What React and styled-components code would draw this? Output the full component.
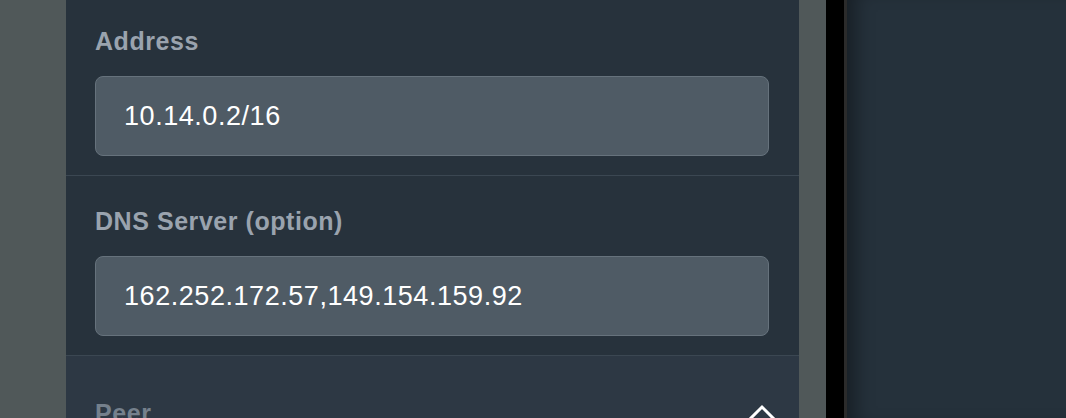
import styled, { createGlobalStyle } from 'styled-components';

const GlobalStyle = createGlobalStyle`
  html, body {
    margin: 0;
    padding: 0;
    height: 418px;
    overflow: hidden;
    background: #505859;
  }
  * {
    box-sizing: border-box;
  }
`;

const Screen = styled.div`
  display: flex;
  height: 418px;
  width: 1066px;
  font-family: 'Liberation Sans', Arial, sans-serif;
`;

const Dim = styled.div`
  flex: 0 0 ${(p) => p.$w}px;
  background: #505859;
`;

// panel is scrolled a few px, so the first section starts above the top edge
const Panel = styled.div`
  flex: 0 0 733px;
  background: #27323c;
  display: flex;
  flex-direction: column;
  margin-top: -4px;
`;

const Section = styled.div`
  padding: 30px 30px 19px 29px;
  border-bottom: 1px solid #3b4752;
`;

const Label = styled.div`
  font-size: 25px;
  line-height: 30px;
  font-weight: 700;
  letter-spacing: 0.55px;
  color: #9aa3ae;
  margin-bottom: 20px;
`;

const Field = styled.div`
  height: 80px;
  border: 1px solid #66727c;
  border-radius: 8px;
  background: #4f5b65;
  display: flex;
  align-items: center;
  padding: 0 28px;
  font-size: 27px;
  letter-spacing: 0.55px;
  color: #ffffff;
`;

const Collapsible = styled.div`
  flex: 1;
  background: #2d3844;
  padding: 42px 22px 0 29px;
  display: flex;
  justify-content: space-between;
  align-items: flex-start;
`;

const PeerTitle = styled.div`
  font-size: 25px;
  line-height: 30px;
  font-weight: 700;
  letter-spacing: 0.55px;
  color: #75808c;
`;

const Chevron = styled.svg`
  width: 30px;
  height: 18px;
  margin-top: 6px;
`;

const Divider = styled.div`
  flex: 0 0 18px;
  background: #000;
`;

const Backpane = styled.div`
  flex: 1;
  background: #25313b;
  box-shadow: inset 3px 0 0 #2b2b2b, inset 22px 0 18px -10px rgba(0, 0, 0, 0.35);
`;

function Entry({ label, value }) {
  return (
    <Section>
      <Label>{label}</Label>
      <Field>{value}</Field>
    </Section>
  );
}

export default function App() {
  return (
    <>
      <GlobalStyle />
      <Screen>
        <Dim $w={66} />
        <Panel>
          <Entry label="Address" value="10.14.0.2/16" />
          <Entry label="DNS Server (option)" value="162.252.172.57,149.154.159.92" />
          <Collapsible>
            <PeerTitle>Peer</PeerTitle>
            <Chevron viewBox="0 0 30 18">
              <path d="M2 16 L15 3 L28 16" fill="none" stroke="#ffffff" strokeWidth="3" />
            </Chevron>
          </Collapsible>
        </Panel>
        <Dim $w={27} />
        <Divider />
        <Backpane />
      </Screen>
    </>
  );
}
